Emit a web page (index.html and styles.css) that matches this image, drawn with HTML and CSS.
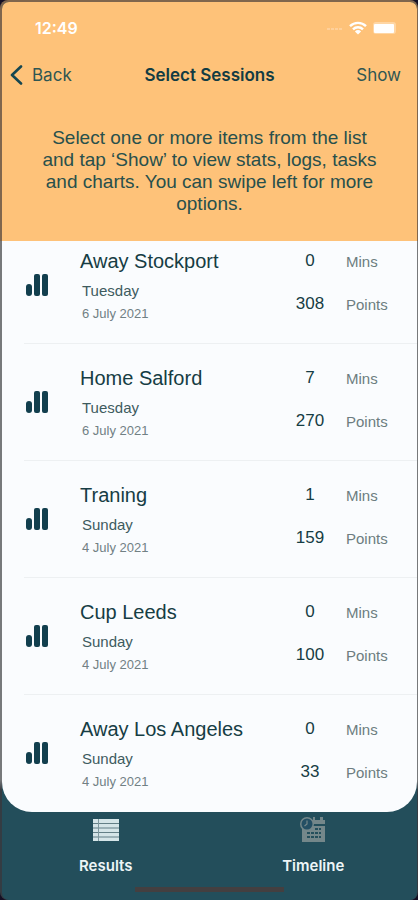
FILE: index.html
```html
<!DOCTYPE html>
<html lang="en">
<head>
<meta charset="utf-8">
<meta name="viewport" content="width=device-width, initial-scale=1">
<title>Select Sessions</title>
<link rel="stylesheet" href="styles.css">
</head>
<body>
<svg width="0" height="0" class="symbols" aria-hidden="true">
  <symbol id="bars" viewBox="0 0 22 22">
    <rect x="0" y="10" width="6" height="12" rx="3"/>
    <rect x="8" y="0" width="6" height="22" rx="2"/>
    <rect x="16" y="0" width="6" height="22" rx="2"/>
  </symbol>
</svg>
<div class="frame">
<div class="screen">
  <header class="header">
    <div class="status">
      <span class="time">12:49</span>
      <span class="indicators">
        <svg width="16" height="4" viewBox="0 0 16 4" fill="#ffd09a" aria-hidden="true"><rect x="0" y="2" width="3" height="2"/><rect x="4" y="2" width="3" height="2"/><rect x="8" y="2" width="3" height="2"/><rect x="12" y="2" width="3" height="2"/></svg>
        <svg class="wifi" width="18" height="14" viewBox="0 0 18 14" fill="none" stroke="#fff" stroke-width="2.4" aria-hidden="true"><path d="M1 5.200C5.500.700 12.500.700 17 5.200"/><path d="M4 8.300C6.800 5.600 11.200 5.600 14 8.300"/><path d="M9 13.500L5.900 10.400Q9 7.800 12.100 10.400Z" fill="#fff" stroke="none"/></svg>
        <svg width="24" height="12" viewBox="0 0 24 12" aria-hidden="true"><rect x="0" y="0" width="23" height="12" rx="3" fill="#ffd6a4"/><rect x="1" y="2" width="20" height="9" rx="1" fill="#fff"/></svg>
      </span>
    </div>
    <nav class="navbar">
      <button class="nav-button back" type="button"><svg width="13" height="20" viewBox="0 0 13 20" fill="none" stroke="#154650" stroke-width="2.600" stroke-linecap="round" stroke-linejoin="round" aria-hidden="true"><path d="M11 1.500L2 10L11 18.500"/></svg>Back</button>
      <h1 class="title">Select Sessions</h1>
      <button class="nav-button show" type="button">Show</button>
    </nav>
    <p class="intro">Select one or more items from the list and tap ‘Show’ to view stats, logs, tasks and charts. You can swipe left for more options.</p>
  </header>
  <main class="content">
    <ul class="sessions">
      <li class="session"><svg class="chart" aria-hidden="true"><use href="#bars"/></svg><div class="details"><h2>Away Stockport</h2><p class="day">Tuesday</p><p class="date">6 July 2021</p></div><dl class="stats"><dd>0</dd><dt>Mins</dt><dd>308</dd><dt>Points</dt></dl></li>
      <li class="session"><svg class="chart" aria-hidden="true"><use href="#bars"/></svg><div class="details"><h2>Home Salford</h2><p class="day">Tuesday</p><p class="date">6 July 2021</p></div><dl class="stats"><dd>7</dd><dt>Mins</dt><dd>270</dd><dt>Points</dt></dl></li>
      <li class="session"><svg class="chart" aria-hidden="true"><use href="#bars"/></svg><div class="details"><h2>Traning</h2><p class="day">Sunday</p><p class="date">4 July 2021</p></div><dl class="stats"><dd>1</dd><dt>Mins</dt><dd>159</dd><dt>Points</dt></dl></li>
      <li class="session"><svg class="chart" aria-hidden="true"><use href="#bars"/></svg><div class="details"><h2>Cup Leeds</h2><p class="day">Sunday</p><p class="date">4 July 2021</p></div><dl class="stats"><dd>0</dd><dt>Mins</dt><dd>100</dd><dt>Points</dt></dl></li>
      <li class="session"><svg class="chart" aria-hidden="true"><use href="#bars"/></svg><div class="details"><h2>Away Los Angeles</h2><p class="day">Sunday</p><p class="date">4 July 2021</p></div><dl class="stats"><dd>0</dd><dt>Mins</dt><dd>33</dd><dt>Points</dt></dl></li>
    </ul>
  </main>
  <nav class="tabs">
    <button class="tab" type="button">
      <svg width="28" height="26" viewBox="0 0 28 26" aria-hidden="true"><rect x="1" y="2" width="26" height="22" fill="#d5e5e8"/><path d="M1 6.500H27M1 11H27M1 15.500H27M1 20H27" stroke="#637f86" stroke-width="1.200"/><path d="M6.500 2V24" stroke="#7e989e" stroke-width="1"/></svg>
      Results
    </button>
    <button class="tab" type="button">
      <svg width="28" height="26" viewBox="0 0 28 26" aria-hidden="true">
        <path d="M3 3H26V7H3ZM3 9H26V25H3Z" fill="#74878a"/>
        <path d="M14 0H16V4H14ZM21 0H24V4H21Z" fill="#74878a"/>
        <circle cx="8" cy="7" r="7" fill="#74878a"/><circle cx="8" cy="7" r="5.500" fill="#244f64"/>
        <path d="M8 3.500V7L5.500 9" fill="none" stroke="#74878a" stroke-width="1.200"/>
        <path d="M16 11h3v2h-3zM20 11h2v2h-2zM8 15h3v2H8zM12 15h3v2h-3zM16 15h3v2h-3zM20 15h2v2h-2zM8 19h3v2H8zM12 19h3v2h-3zM16 19h3v2h-3zM20 19h2v2h-2z" fill="#244f5c"/>
      </svg>
      Timeline
    </button>
  </nav>
  <div class="home"></div>
</div>
</div>
</body>
</html>
```
FILE: styles.css
```css
* {
  box-sizing: border-box;
  margin: 0;
  padding: 0;
}

body {
  background: #140f24;
  font-family: "Liberation Sans", Arial, sans-serif;
  color: #164047;
}

.symbols {
  position: absolute;
}

.frame {
  min-height: 100vh;
  display: flex;
  padding: 2px 1px 0 2px;
  border-radius: 8px;
  background: linear-gradient(#80664d 0, #80664d 241px, #77797b 241px, #77797b 780px, #343c43 790px);
}

.screen {
  flex: 1;
  min-width: 0;
  display: flex;
  flex-direction: column;
  border-radius: 7px;
  overflow: hidden;
  background: #234e5b;
}

.header {
  background: #fec279;
  padding: 16px 16px 26px;
}

.status {
  display: flex;
  justify-content: space-between;
  align-items: center;
  height: 20px;
  padding: 0 4px 0 17px;
  color: #fff;
}

.time {
  font: 600 16px/20px Inter, sans-serif;
}

.indicators {
  display: flex;
  align-items: center;
  gap: 6px;
}

.navbar {
  display: grid;
  grid-template-columns: 1fr auto 1fr;
  align-items: center;
  height: 44px;
  margin-top: 15px;
}

.nav-button {
  display: flex;
  align-items: center;
  gap: 9px;
  border: 0;
  background: none;
  color: #2f5652;
  font: 400 17px/24px Inter, sans-serif;
}

.back {
  margin-left: -8px;
}

.show {
  justify-self: end;
}

.title {
  color: #123c43;
  font: 600 17px/24px Inter, sans-serif;
}

.intro {
  margin-top: 30px;
  padding: 0 20px;
  color: #28504c;
  font-size: 19px;
  line-height: 22px;
  text-align: center;
}

.content {
  border-radius: 0 0 30px 30px;
  overflow: hidden;
  background: #fafcfe;
}

.sessions {
  list-style: none;
  margin-top: -14px;
}

.session {
  display: grid;
  grid-template-columns: 56px 1fr 123px;
  height: 117px;
  margin-left: 22px;
  border-bottom: 1px solid #edf0f2;
}

.session:last-child {
  border-bottom-color: transparent;
}

.chart {
  width: 22px;
  height: 22px;
  margin: 47px 0 0 2px;
  fill: #123f4e;
}

.details {
  padding-top: 22px;
}

.details h2 {
  color: #163d44;
  font-size: 20px;
  font-weight: 400;
  line-height: 24px;
}

.day {
  padding: 6px 2px 0;
  color: #3e5b5e;
  font-size: 15px;
  line-height: 24px;
}

.date {
  padding: 0 2px;
  color: #718084;
  font-size: 13px;
  line-height: 22px;
}

.stats {
  display: grid;
  grid-template-columns: 32px 1fr;
  grid-template-rows: 24px 24px;
  row-gap: 19px;
  column-gap: 20px;
  align-content: start;
  align-items: center;
  padding-top: 22px;
}

.stats dd {
  color: #163d44;
  font-size: 17px;
  text-align: center;
}

.stats dt {
  color: #6c7d80;
  font-size: 15px;
}

.tabs {
  display: grid;
  grid-template-columns: 1fr 1fr;
}

.tab {
  display: flex;
  flex-direction: column;
  align-items: center;
  gap: 11px;
  padding: 5px 0 8px;
  border: 0;
  background: none;
  color: #edf5f7;
  font: 600 15px/24px Inter, sans-serif;
}

.home {
  width: 36%;
  height: 5px;
  margin: auto auto 8px;
  background: #443f40;
}
```
